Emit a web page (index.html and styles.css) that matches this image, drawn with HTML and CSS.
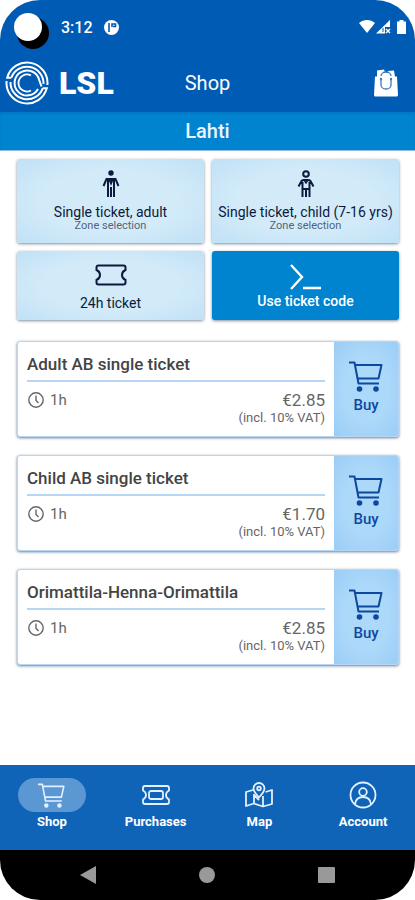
FILE: index.html
```html
<!DOCTYPE html>
<html lang="en">
<head>
  <meta charset="UTF-8">
  <meta name="viewport" content="width=device-width, initial-scale=1.0">
  <title>LSL Shop</title>
  <link rel="stylesheet" href="styles.css">
</head>
<body>

  <!-- Shared icons -->
  <svg class="sprite" aria-hidden="true">
    <symbol id="cart" viewBox="0 0 34 31">
      <g fill="none" stroke="currentColor" stroke-width="2" stroke-linejoin="round">
        <path d="M0 1.500h5.500L9.500 22.500h20.500M6 4h26.500l-3 13.500H8.500"/>
      </g>
      <circle cx="10.500" cy="28" r="2.800" fill="currentColor"/>
      <circle cx="27" cy="28" r="2.800" fill="currentColor"/>
    </symbol>
    <symbol id="clock" viewBox="0 0 16 16">
      <g fill="none" stroke="currentColor" stroke-width="1.400">
        <circle cx="8" cy="8" r="7.200"/>
        <path d="M8 3.500V8.500l2.500 2.500"/>
      </g>
    </symbol>
  </svg>

  <div class="phone">
    <div class="status-bar">
      <span class="camera"></span>
      <span class="clock-time">3:12</span>
      <svg class="status-app" width="15" height="15" viewBox="0 0 15 15">
        <circle cx="7.500" cy="7.500" r="7.500" fill="#fff"/>
        <path d="M5 3v9M8 7V4h3.500v2.500H9" fill="none" stroke="#005bb5" stroke-width="1.600"/>
      </svg>
      <svg class="status-icons" width="48" height="16" viewBox="0 0 48 16">
        <path d="M0 4C4.500 0 11.500 0 16 4L8 14z" fill="#fff"/>
        <path d="M17 14.500L31 1v7h-5v6.500z" fill="#fff"/>
        <path d="M27 10l4 4M31 10l-4 4" stroke="#fff" stroke-width="1.400"/>
        <path d="M24 9v4" stroke="#005bb5" stroke-width="1"/>
        <path d="M38 2.500h2.500V1h4v1.500H47V15h-9z" fill="#fff"/>
      </svg>
    </div>

    <header class="header">
      <a class="brand" href="#" aria-label="LSL home">
        <svg width="44" height="44" viewBox="0 0 44 44" fill="none" stroke="#fff" stroke-width="2">
          <path d="M6.300 16.700H2.200A20.500 20.500 0 0 1 42.400 24M6.300 16.700A16.600 16.600 0 0 1 38.500 23"/>
          <path d="M6.300 16.700H2.200A20.500 20.500 0 0 1 42.400 24M6.300 16.700A16.600 16.600 0 0 1 38.500 23" transform="rotate(180 22 22)"/>
          <path d="M33 28A12.500 12.500 0 1 1 34.200 19l2.300 6.500"/>
          <path d="M26 29.500A8.500 8.500 0 1 1 26 14.500" stroke-width="1.800"/>
        </svg>
        <span class="brand-name">LSL</span>
      </a>
      <h1>Shop</h1>
      <button class="bag" aria-label="Shopping bag">
        <svg width="24" height="28" viewBox="0 0 24 28">
          <path d="M3 8V1.500l7-1 1 2.500 2 1 1-2 6-.5 1 6.500z" fill="#fff"/>
          <path d="M1 7.500h22L24 26q0 1.500-1.500 1.500h-21Q0 27.500 0 26z" fill="#fff"/>
          <path d="M7 10v6a5 4 0 0 0 10 0v-6M7 7a5 4 0 0 1 10 0" fill="none" stroke="#3979c4" stroke-width="1.300"/>
          <circle cx="7" cy="10" r="1.200" fill="#3979c4"/>
          <circle cx="17" cy="10" r="1.200" fill="#3979c4"/>
        </svg>
      </button>
    </header>
    <div class="region">Lahti</div>

    <main class="content">
      <!-- Ticket types -->
      <div class="tiles">
        <button class="tile">
          <svg width="18" height="28" viewBox="0 0 18 28">
            <circle cx="9" cy="3" r="2.700" fill="currentColor"/>
            <path d="M1.500 16L4.500 9h9l3 7M6 9v18M12 9v18M9 17v10" fill="none" stroke="currentColor" stroke-width="2"/>
            <path d="M6 8.500h6L9 16z" fill="currentColor"/>
          </svg>
          <span>Single ticket, adult</span>
          <small>Zone selection</small>
        </button>
        <button class="tile">
          <svg width="18" height="28" viewBox="0 0 18 28" fill="none" stroke="currentColor" stroke-width="2">
            <circle cx="9" cy="4" r="2.800"/>
            <path d="M5.500 12v15M12.500 12v15M5.500 19h7M9 20v7M1.500 16.500L4.500 11q1-1 2.500-1h4q1.500 0 2.500 1l3 5.500"/>
            <path d="M7 10l2 3 2-3" stroke-width="1.400"/>
          </svg>
          <span>Single ticket, child (7-16 yrs)</span>
          <small>Zone selection</small>
        </button>
        <button class="tile tile-short">
          <svg width="32" height="22" viewBox="0 0 32 22">
            <path d="M3.500 1.500h25q2 0 2 2v2.500q-3.500 1.500-3.500 5t3.500 5v2.500q0 2-2 2h-25q-2 0-2-2V16Q5 14.500 5 11T1.500 6V3.500q0-2 2-2z" fill="none" stroke="currentColor" stroke-width="2"/>
          </svg>
          <span>24h ticket</span>
        </button>
        <button class="tile tile-short tile-code">
          <svg width="32" height="26" viewBox="0 0 32 26">
            <path d="M1 1l11 12L1 25M13 24h18" fill="none" stroke="currentColor" stroke-width="2.400"/>
          </svg>
          <span>Use ticket code</span>
        </button>
      </div>

      <!-- Tickets for sale -->
      <article class="ticket">
        <div class="ticket-info">
          <h2>Adult AB single ticket</h2>
          <div class="ticket-details">
            <span class="duration"><svg width="16" height="16"><use href="#clock"/></svg>1h</span>
            <div class="price">€2.85<small>(incl. 10% VAT)</small></div>
          </div>
        </div>
        <button class="buy"><svg width="34" height="31"><use href="#cart"/></svg>Buy</button>
      </article>
      <article class="ticket">
        <div class="ticket-info">
          <h2>Child AB single ticket</h2>
          <div class="ticket-details">
            <span class="duration"><svg width="16" height="16"><use href="#clock"/></svg>1h</span>
            <div class="price">€1.70<small>(incl. 10% VAT)</small></div>
          </div>
        </div>
        <button class="buy"><svg width="34" height="31"><use href="#cart"/></svg>Buy</button>
      </article>
      <article class="ticket">
        <div class="ticket-info">
          <h2>Orimattila-Henna-Orimattila</h2>
          <div class="ticket-details">
            <span class="duration"><svg width="16" height="16"><use href="#clock"/></svg>1h</span>
            <div class="price">€2.85<small>(incl. 10% VAT)</small></div>
          </div>
        </div>
        <button class="buy"><svg width="34" height="31"><use href="#cart"/></svg>Buy</button>
      </article>
    </main>

    <nav class="tabs">
      <a class="tab active" href="#">
        <span class="tab-icon"><svg width="27" height="25"><use href="#cart"/></svg></span>
        Shop
      </a>
      <a class="tab" href="#">
        <span class="tab-icon">
          <svg width="28" height="20" viewBox="0 0 28 20" fill="none" stroke="currentColor" stroke-width="1.800">
            <path d="M3 1h22q2 0 2 2v2.500q-3 1.500-3 4.500t3 4.500V17q0 2-2 2H3q-2 0-2-2v-2.500Q4 13 4 10T1 5.500V3q0-2 2-2z"/>
            <rect x="7" y="6" width="14" height="8" rx="2"/>
          </svg>
        </span>
        Purchases
      </a>
      <a class="tab" href="#">
        <span class="tab-icon">
          <svg width="28" height="26" viewBox="0 0 28 26" fill="none" stroke="currentColor" stroke-width="1.800" stroke-linejoin="round">
            <path d="M8 8L1 10v14l8-2.500 9 3 9-2.500V8l-6.500 2M9 12v9.500M18 14v10.500M9 13l5 5"/>
            <path d="M14 15.500Q8.500 9.500 8.500 6.500a5.500 5.500 0 0 1 11 0Q19.500 9.500 14 15.500z"/>
            <circle cx="14" cy="6.500" r="1.800"/>
          </svg>
        </span>
        Map
      </a>
      <a class="tab" href="#">
        <span class="tab-icon">
          <svg width="28" height="28" viewBox="0 0 28 28" fill="none" stroke="currentColor" stroke-width="1.800">
            <circle cx="14" cy="14" r="12.500"/>
            <circle cx="14" cy="11" r="3.800"/>
            <path d="M6 23q1-7 8-7t8 7"/>
          </svg>
        </span>
        Account
      </a>
    </nav>

    <div class="system-bar">
      <button aria-label="Back"><svg width="16" height="18" viewBox="0 0 16 18"><path d="M16 0v18L0 9z" fill="#999"/></svg></button>
      <button aria-label="Home"><svg width="16" height="16" viewBox="0 0 16 16"><circle cx="8" cy="8" r="8" fill="#999"/></svg></button>
      <button aria-label="Recent apps"><svg width="17" height="16" viewBox="0 0 17 16"><rect width="17" height="16" rx="1" fill="#999"/></svg></button>
    </div>
  </div>

</body>
</html>
```
FILE: styles.css
```css
* {
  box-sizing: border-box;
}

body {
  margin: 0;
  background-color: #fff;
  font-family: Roboto, "Liberation Sans", sans-serif;
  color: #444;
}

button {
  border: none;
  padding: 0;
  background: none;
  font-family: inherit;
  color: inherit;
  cursor: pointer;
}

svg {
  display: block;
  flex-shrink: 0;
}

.sprite {
  width: 0;
  height: 0;
  position: absolute;
}

.phone {
  min-height: 100vh;
  display: flex;
  flex-direction: column;
  border-radius: 40px;
  overflow: hidden;
}

/* Status bar and header */
.status-bar {
  display: flex;
  align-items: center;
  height: 54px;
  padding: 0 8px 0 14px;
  background-color: #005bb5;
  color: #fff;
}

.camera {
  width: 28px;
  height: 28px;
  border-radius: 50%;
  background-color: #fff;
  box-shadow: 5px 6px 0 2px #000;
}

.clock-time {
  margin: 0 11px 0 19px;
  font-size: 16px;
  font-weight: 500;
}

.status-icons {
  margin-left: auto;
}

.header {
  display: grid;
  grid-template-columns: 1fr auto 1fr;
  align-items: center;
  height: 58px;
  padding: 0 17px 0 5px;
  background-color: #005bb5;
  color: #fff;
}

.brand {
  display: flex;
  align-items: center;
  gap: 10px;
  color: #fff;
  text-decoration: none;
}

.brand-name {
  font-size: 32px;
  font-weight: 900;
}

.header h1 {
  margin: 0 0 0 12px;
  font-size: 20px;
  font-weight: 400;
}

.bag {
  justify-self: end;
}

.region {
  height: 39px;
  border-bottom: 1px solid #8bb9e8;
  background-color: #0084cf;
  box-shadow: inset 0 2px 2px #0078c6;
  color: #eaf5ff;
  font-size: 20px;
  font-weight: 500;
  line-height: 38px;
  text-align: center;
}

.content {
  flex: 1;
  padding: 8px 16px 16px 17px;
}

/* Ticket type tiles */
.tiles {
  display: grid;
  grid-template-columns: 1fr 1fr;
  gap: 8px;
  margin-bottom: 21px;
}

.tile {
  display: flex;
  flex-direction: column;
  align-items: center;
  height: 84px;
  padding-top: 11px;
  border-radius: 3px;
  background: radial-gradient(ellipse, #d3ebf9 50%, #c0e1f6);
  box-shadow: 0 1px 3px rgba(0, 30, 60, 0.5);
  color: #0c1a3e;
  font-size: 14px;
  line-height: 16px;
  white-space: nowrap;
}

.tile span {
  margin-top: 6px;
}

.tile small {
  font-size: 11px;
  line-height: 12px;
  color: #536479;
}

.tile-short {
  height: 69px;
  padding-top: 13px;
}

.tile-short span {
  margin-top: 9px;
}

.tile-code {
  background: #0084cf;
  color: #fff;
  font-weight: 500;
}

.tile-code span {
  margin-top: 3px;
}

/* Tickets for sale */
.ticket {
  display: flex;
  min-height: 96px;
  margin-bottom: 18px;
  border: 1px solid #b5d7f5;
  border-radius: 3px;
  overflow: hidden;
  background-color: #fff;
  box-shadow: 0 1px 3px rgba(0, 40, 80, 0.6);
}

.ticket-info {
  flex: 1;
  padding: 12px 9px 0;
}

.ticket h2 {
  margin: 0;
  padding-bottom: 6px;
  border-bottom: 2px solid #b5d7f5;
  font-size: 17px;
  font-weight: 500;
  line-height: 20px;
}

.ticket-details {
  display: flex;
  justify-content: space-between;
  align-items: flex-start;
  padding-top: 8px;
  color: #666;
}

.duration {
  display: flex;
  align-items: center;
  gap: 6px;
  padding-left: 1px;
  font-size: 15px;
  line-height: 20px;
}

.price {
  font-size: 17px;
  line-height: 20px;
  text-align: right;
}

.price small {
  display: block;
  font-size: 13px;
  line-height: 16px;
}

.buy {
  display: flex;
  flex-direction: column;
  align-items: center;
  gap: 4px;
  width: 64px;
  padding-top: 19px;
  background: radial-gradient(ellipse, #acd8f9 50%, #9acdf6);
  color: #0c489f;
  font-size: 15px;
  font-weight: 500;
}

/* Bottom navigation */
.tabs {
  display: grid;
  grid-template-columns: repeat(4, 1fr);
  height: 85px;
  padding-top: 13px;
  background-color: #1064b8;
}

.tab {
  display: flex;
  flex-direction: column;
  align-items: center;
  gap: 2px;
  color: #fff;
  font-size: 13px;
  font-weight: 700;
  line-height: 16px;
  text-decoration: none;
}

.tab-icon {
  display: flex;
  align-items: center;
  justify-content: center;
  width: 68px;
  height: 34px;
  border-radius: 17px;
  color: #e4f0ff;
}

.active .tab-icon {
  background-color: #5b97d2;
}

.system-bar {
  display: flex;
  justify-content: space-around;
  align-items: center;
  height: 50px;
  padding: 0 28px;
  background-color: #000;
}
```
